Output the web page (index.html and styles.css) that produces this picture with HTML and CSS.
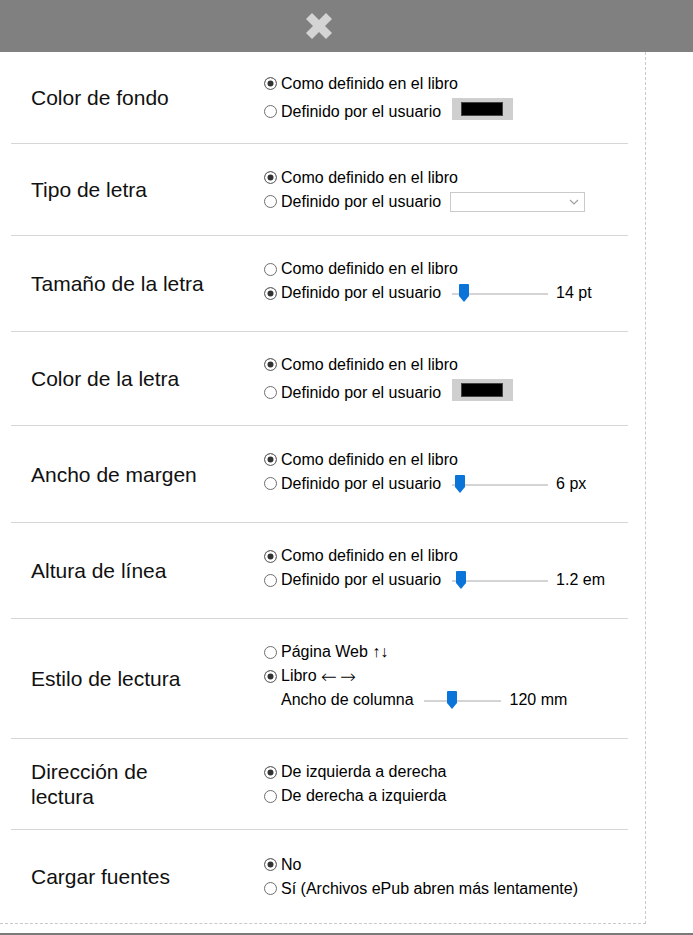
FILE: index.html
```html
<!DOCTYPE html>
<html lang="es">
<head>
<meta charset="utf-8">
<title>Preferencias</title>
<link rel="stylesheet" href="styles.css">
</head>
<body>
<div class="topbar">
  <svg class="close" width="30" height="30" viewBox="0 0 30 30" aria-hidden="true">
    <line x1="5" y1="5" x2="25" y2="25"/>
    <line x1="25" y1="5" x2="5" y2="25"/>
  </svg>
</div>
<div class="panel">
  <div class="rows">
    <div class="row h92">
      <div class="label">Color de fondo</div>
      <div class="opts">
        <label class="opt tall"><input type="radio" name="bg" class="radio" checked>Como definido en el libro</label>
        <label class="opt tall"><input type="radio" name="bg" class="radio">Definido por el usuario<span class="swatch"><span class="swatch-inner"></span></span></label>
      </div>
    </div>
    <div class="row h92">
      <div class="label">Tipo de letra</div>
      <div class="opts">
        <label class="opt"><input type="radio" name="ff" class="radio" checked>Como definido en el libro</label>
        <label class="opt"><input type="radio" name="ff" class="radio">Definido por el usuario<span class="select"><svg width="10" height="6" viewBox="0 0 10 6"><polyline points="1,1 5,5 9,1"/></svg></span></label>
      </div>
    </div>
    <div class="row h96">
      <div class="label">Tamaño de la letra</div>
      <div class="opts">
        <label class="opt"><input type="radio" name="fs" class="radio">Como definido en el libro</label>
        <label class="opt slide"><input type="radio" name="fs" class="radio" checked>Definido por el usuario<span class="slider"><span class="track"></span><svg class="thumb" style="left:7px" width="10" height="18" viewBox="0 0 10 18"><path d="M1 0h8a1 1 0 0 1 1 1v11l-5 6-5-6V1a1 1 0 0 1 1-1z"/></svg></span><span class="val">14 pt</span></label>
      </div>
    </div>
    <div class="row h94">
      <div class="label">Color de la letra</div>
      <div class="opts">
        <label class="opt tall"><input type="radio" name="fc" class="radio" checked>Como definido en el libro</label>
        <label class="opt tall"><input type="radio" name="fc" class="radio">Definido por el usuario<span class="swatch"><span class="swatch-inner"></span></span></label>
      </div>
    </div>
    <div class="row h97">
      <div class="label">Ancho de margen</div>
      <div class="opts">
        <label class="opt"><input type="radio" name="mg" class="radio" checked>Como definido en el libro</label>
        <label class="opt slide"><input type="radio" name="mg" class="radio">Definido por el usuario<span class="slider"><span class="track"></span><svg class="thumb" style="left:3px" width="10" height="18" viewBox="0 0 10 18"><path d="M1 0h8a1 1 0 0 1 1 1v11l-5 6-5-6V1a1 1 0 0 1 1-1z"/></svg></span><span class="val">6 px</span></label>
      </div>
    </div>
    <div class="row h96">
      <div class="label">Altura de línea</div>
      <div class="opts">
        <label class="opt"><input type="radio" name="lh" class="radio" checked>Como definido en el libro</label>
        <label class="opt slide"><input type="radio" name="lh" class="radio">Definido por el usuario<span class="slider"><span class="track"></span><svg class="thumb" style="left:4px" width="10" height="18" viewBox="0 0 10 18"><path d="M1 0h8a1 1 0 0 1 1 1v11l-5 6-5-6V1a1 1 0 0 1 1-1z"/></svg></span><span class="val">1.2 em</span></label>
      </div>
    </div>
    <div class="row h120">
      <div class="label">Estilo de lectura</div>
      <div class="opts">
        <label class="opt"><input type="radio" name="rs" class="radio">Página Web ↑↓</label>
        <label class="opt"><input type="radio" name="rs" class="radio" checked>Libro&nbsp;<span class="arrows">← →</span></label>
        <div class="opt slide sub">Ancho de columna<span class="slider narrow"><span class="track"></span><svg class="thumb" style="left:23px" width="10" height="18" viewBox="0 0 10 18"><path d="M1 0h8a1 1 0 0 1 1 1v11l-5 6-5-6V1a1 1 0 0 1 1-1z"/></svg></span><span class="val">120 mm</span></div>
      </div>
    </div>
    <div class="row h91">
      <div class="label">Dirección de lectura</div>
      <div class="opts">
        <label class="opt"><input type="radio" name="dir" class="radio" checked>De izquierda a derecha</label>
        <label class="opt"><input type="radio" name="dir" class="radio">De derecha a izquierda</label>
      </div>
    </div>
    <div class="row h93 last">
      <div class="label">Cargar fuentes</div>
      <div class="opts">
        <label class="opt"><input type="radio" name="fonts" class="radio" checked>No</label>
        <label class="opt"><input type="radio" name="fonts" class="radio">Sí (Archivos ePub abren más lentamente)</label>
      </div>
    </div>
  </div>
</div>
<div class="footer"></div>
</body>
</html>
```

FILE: styles.css
```css
html, body {
  margin: 0;
  padding: 0;
  background: #ffffff;
  overflow: hidden;
}

body {
  font-family: "Liberation Sans", Arial, sans-serif;
  color: #000;
}

.topbar {
  height: 52px;
  background: #808080;
  display: flex;
  align-items: center;
  padding-left: 304px;
}

.close line {
  stroke: #d4d4d4;
  stroke-width: 8.5;
  stroke-linecap: butt;
}

.panel {
  width: 645px;
  border-right: 1px dashed #c9c9c9;
  border-bottom: 1px dashed #c9c9c9;
}

.rows {
  padding: 0 17px 0 11px;
}

.row {
  display: flex;
  align-items: center;
  box-sizing: border-box;
  border-bottom: 1px solid #d6d6d6;
}

.row.last {
  border-bottom: none;
}

.h91 { height: 91px; }
.h92 { height: 92px; }
.h93 { height: 93px; }
.h94 { height: 94px; }
.h96 { height: 96px; }
.h97 { height: 97px; }
.h120 { height: 120px; }

.label {
  flex: 0 0 252px;
  box-sizing: border-box;
  padding: 0 52px 0 20px;
  font-size: 21px;
  line-height: 25px;
  color: #111;
}

.opts {
  display: flex;
  flex-direction: column;
}

.opt {
  display: flex;
  align-items: center;
  height: 24px;
  font-size: 16px;
  line-height: 18px;
  white-space: pre;
}

.opt.tall {
  height: 28px;
}

.opt.slide {
  padding-bottom: 5px;
}

.opt.sub {
  padding-left: 18px;
}

.arrows {
  font-family: "DejaVu Sans", sans-serif;
  font-size: 19px;
  font-weight: 300;
  word-spacing: -3px;
}

.radio {
  -webkit-appearance: none;
  appearance: none;
  width: 13px;
  height: 13px;
  margin: 0 4px 0 1px;
  border: 1px solid #6e6e6e;
  border-radius: 50%;
  background: #fff;
  box-sizing: border-box;
  flex: none;
}

.radio:checked {
  background: #333;
  box-shadow: inset 0 0 0 2.5px #fff;
}

.swatch {
  display: inline-flex;
  margin: 0 0 5px 11px;
  padding: 4px 10px 4px 9px;
  background: #cfcfcf;
}

.swatch-inner {
  width: 42px;
  height: 14px;
  box-sizing: border-box;
  background: #000;
  border: 1px solid #444;
}

.select {
  display: inline-flex;
  align-items: center;
  justify-content: flex-end;
  box-sizing: border-box;
  width: 135px;
  height: 20px;
  margin-left: 9px;
  padding-right: 5px;
  border: 1px solid #cacaca;
  background: #fff;
}

.select polyline {
  fill: none;
  stroke: #a0a0a0;
  stroke-width: 1.2;
}

.slider {
  position: relative;
  display: flex;
  align-items: center;
  width: 96px;
  height: 24px;
  margin-left: 11px;
}

.slider.narrow {
  width: 77px;
  margin-left: 10px;
}

.track {
  flex: 1;
  height: 2px;
  margin-top: 2px;
  background: #d4d4d4;
}

.thumb {
  position: absolute;
  top: 3px;
}

.thumb path {
  fill: #0a74d8;
}

.val {
  margin-left: 8px;
}

.slider.narrow + .val {
  margin-left: 9px;
}

.footer {
  margin-top: 9px;
  height: 2px;
  background: #7a7a7a;
}
```
